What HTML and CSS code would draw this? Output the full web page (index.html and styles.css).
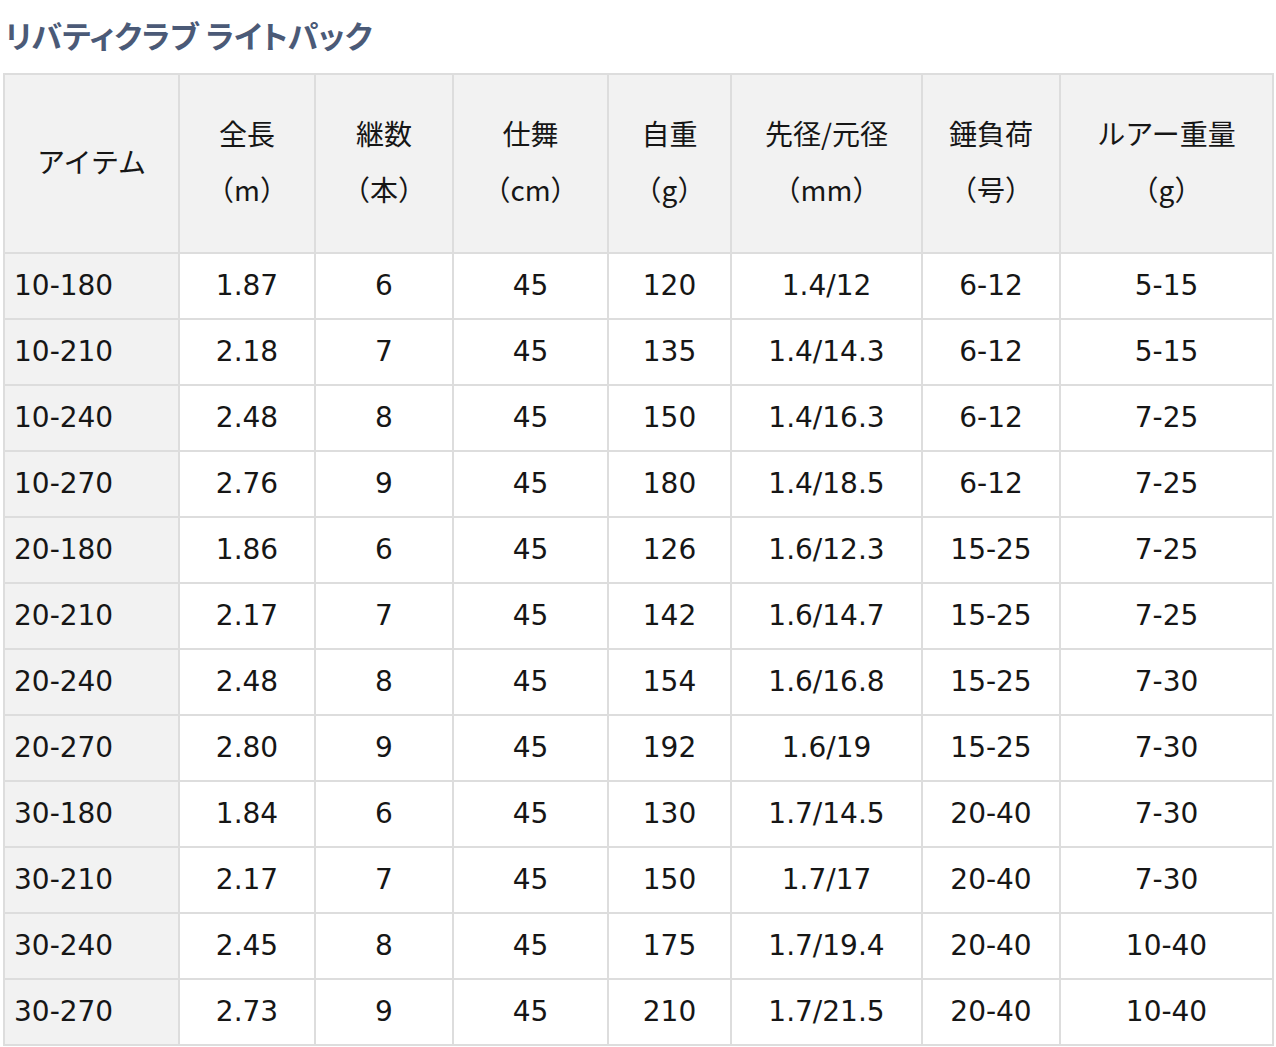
FILE: index.html
```html
<!DOCTYPE html>
<html lang="ja">
<head>
<meta charset="utf-8">
<title>リバティクラブ ライトパック</title>
<link rel="stylesheet" href="styles.css">
</head>
<body>
<h1 class="title">リバティクラブ ライトパック</h1>
<table class="spec">
<colgroup>
<col class="c1"><col class="c2"><col class="c3"><col class="c4"><col class="c5"><col class="c6"><col class="c7"><col class="c8">
</colgroup>
<thead>
<tr>
<th>アイテム</th>
<th><span class="hl">全長</span><span class="hl">（m）</span></th>
<th><span class="hl">継数</span><span class="hl">（本）</span></th>
<th><span class="hl">仕舞</span><span class="hl">（cm）</span></th>
<th><span class="hl">自重</span><span class="hl">（g）</span></th>
<th><span class="hl">先径/元径</span><span class="hl">（mm）</span></th>
<th><span class="hl">錘負荷</span><span class="hl">（号）</span></th>
<th><span class="hl">ルアー重量</span><span class="hl">（g）</span></th>
</tr>
</thead>
<tbody>
<tr><td>10-180</td><td>1.87</td><td>6</td><td>45</td><td>120</td><td>1.4/12</td><td>6-12</td><td>5-15</td></tr>
<tr><td>10-210</td><td>2.18</td><td>7</td><td>45</td><td>135</td><td>1.4/14.3</td><td>6-12</td><td>5-15</td></tr>
<tr><td>10-240</td><td>2.48</td><td>8</td><td>45</td><td>150</td><td>1.4/16.3</td><td>6-12</td><td>7-25</td></tr>
<tr><td>10-270</td><td>2.76</td><td>9</td><td>45</td><td>180</td><td>1.4/18.5</td><td>6-12</td><td>7-25</td></tr>
<tr><td>20-180</td><td>1.86</td><td>6</td><td>45</td><td>126</td><td>1.6/12.3</td><td>15-25</td><td>7-25</td></tr>
<tr><td>20-210</td><td>2.17</td><td>7</td><td>45</td><td>142</td><td>1.6/14.7</td><td>15-25</td><td>7-25</td></tr>
<tr><td>20-240</td><td>2.48</td><td>8</td><td>45</td><td>154</td><td>1.6/16.8</td><td>15-25</td><td>7-30</td></tr>
<tr><td>20-270</td><td>2.80</td><td>9</td><td>45</td><td>192</td><td>1.6/19</td><td>15-25</td><td>7-30</td></tr>
<tr><td>30-180</td><td>1.84</td><td>6</td><td>45</td><td>130</td><td>1.7/14.5</td><td>20-40</td><td>7-30</td></tr>
<tr><td>30-210</td><td>2.17</td><td>7</td><td>45</td><td>150</td><td>1.7/17</td><td>20-40</td><td>7-30</td></tr>
<tr><td>30-240</td><td>2.45</td><td>8</td><td>45</td><td>175</td><td>1.7/19.4</td><td>20-40</td><td>10-40</td></tr>
<tr><td>30-270</td><td>2.73</td><td>9</td><td>45</td><td>210</td><td>1.7/21.5</td><td>20-40</td><td>10-40</td></tr>
</tbody>
</table>
</body>
</html>
```

FILE: styles.css
```css
html, body {
  margin: 0;
  padding: 0;
  background: #ffffff;
}
body {
  padding: 0 0 0 3px;
  font-family: "DejaVu Sans", "Noto Sans CJK JP", sans-serif;
  color: #161616;
}
.title {
  margin: 0;
  padding: 17px 0 0 2px;
  height: 73px;
  box-sizing: border-box;
  font-family: "Noto Sans CJK JP", sans-serif;
  font-size: 31px;
  line-height: 36px;
  font-weight: 700;
  color: #4b5a77;
  font-feature-settings: "palt";
  letter-spacing: 0;
}
.spec {
  border-collapse: collapse;
  table-layout: fixed;
  width: 1271px;
  font-size: 28px;
}
.c1 { width: 175px; }
.c2 { width: 136px; }
.c3 { width: 138px; }
.c4 { width: 155px; }
.c5 { width: 123px; }
.c6 { width: 191px; }
.c7 { width: 138px; }
.c8 { width: 213px; }
.spec th, .spec td {
  border: 2px solid #dddddd;
  padding: 0;
  vertical-align: middle;
  text-align: center;
  white-space: nowrap;
}
.spec th {
  background: #f2f2f2;
  font-weight: 400;
  height: 171px;
  padding-bottom: 6px;
  line-height: 56px;
  font-family: "Noto Sans CJK JP", "DejaVu Sans", sans-serif;
}
.hl {
  display: block;
}
.spec td {
  height: 64px;
  line-height: 32px;
  background: #ffffff;
}
.spec td:first-child {
  background: #f2f2f2;
  text-align: left;
  padding-left: 9px;
}
```
